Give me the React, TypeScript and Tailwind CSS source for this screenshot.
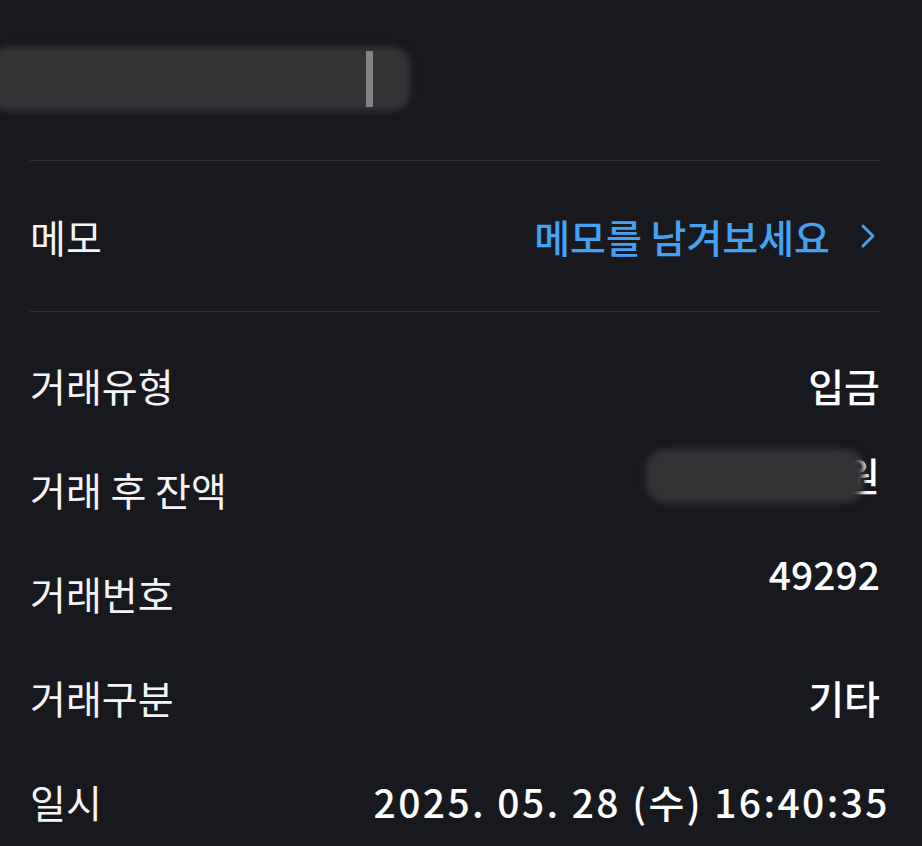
import { ChevronRight } from "lucide-react";

const font = { fontFamily: '"Noto Sans CJK KR", "Noto Sans", sans-serif' };

function Row({ label, children, valueClass = "" }: { label: string; children: React.ReactNode; valueClass?: string }) {
  return (
    <div className="flex h-[104px] items-center justify-between">
      <span className="text-[39px] font-normal text-[#f4f4f6]">{label}</span>
      <span className={`text-[39px] font-medium text-white ${valueClass}`}>{children}</span>
    </div>
  );
}

export default function App() {
  return (
    <div style={font} className="min-h-[846px] w-[922px] overflow-hidden bg-[#18191e] pl-[30px] pr-[42px] text-white">
      {/* redacted title */}
      <div className="h-[160px] pt-[44px]">
        <div className="-ml-[40px] flex h-[70px] w-[460px] items-center">
          <div className="h-[64px] w-[420px] rounded-[18px] bg-[#343437] blur-[3px]" />
          <div className="-ml-[44px] h-[56px] w-[7px] bg-[#a5a5a7] opacity-70" />
        </div>
      </div>

      <div className="h-px bg-[#2d2e33]" />

      {/* memo */}
      <div className="flex h-[150px] items-center justify-between">
        <span className="text-[39px] text-[#f4f4f6]">메모</span>
        <span className="flex items-center gap-[18px] text-[39px] font-medium text-[#47a0f2]">
          메모를 남겨보세요
          <ChevronRight className="-mr-[8px] h-[40px] w-[40px]" strokeWidth={1.7} />
        </span>
      </div>

      <div className="h-px bg-[#2d2e33]" />

      <div className="pt-[21px]">
        <Row label="거래유형">입금</Row>
        <Row label="거래 후 잔액" valueClass="pb-[30px]">
          <span className="relative inline-block">
            원
            <span className="absolute right-[16px] top-[4px] h-[54px] w-[218px] rounded-[20px] bg-[#333336] blur-[3px]" />
          </span>
        </Row>
        <Row label="거래번호" valueClass="pb-[40px]">49292</Row>
        <Row label="거래구분">기타</Row>
        <Row label="일시" valueClass="-mr-[10px] tracking-[2.4px]">2025. 05. 28 (수) 16:40:35</Row>
      </div>
    </div>
  );
}
